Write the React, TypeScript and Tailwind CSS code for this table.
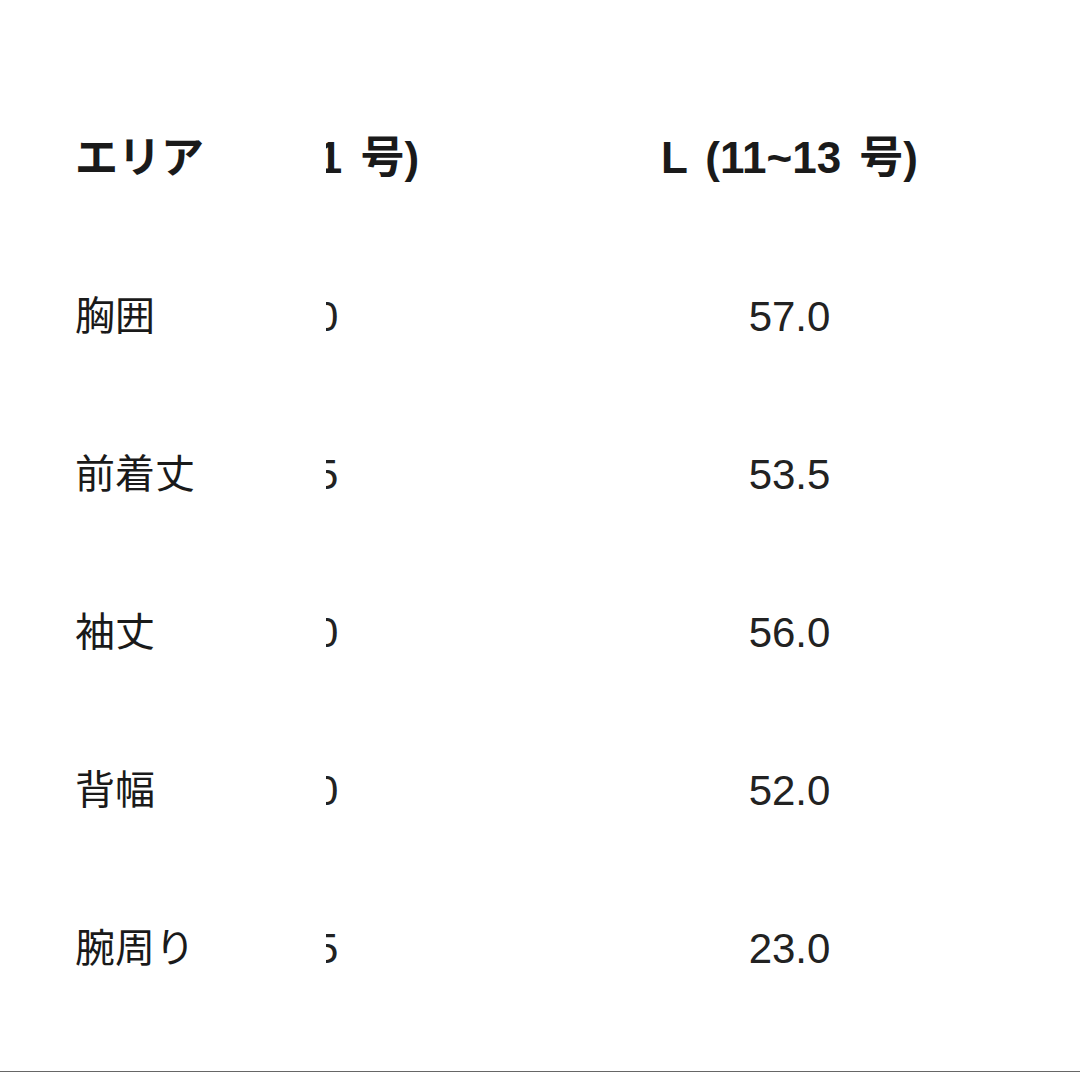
import { useEffect, useRef } from "react";

const sizes = ["M (9~11 号)", "L (11~13 号)"];

const rows = [
  { label: "胸囲", values: ["55.0", "57.0"] },
  { label: "前着丈", values: ["52.5", "53.5"] },
  { label: "袖丈", values: ["55.0", "56.0"] },
  { label: "背幅", values: ["50.0", "52.0"] },
  { label: "腕周り", values: ["22.5", "23.0"] },
];

export default function App() {
  const scrollRef = useRef<HTMLDivElement>(null);

  // the table is shown scrolled sideways, first column stays put
  useEffect(() => {
    if (scrollRef.current) scrollRef.current.scrollLeft = 288;
  }, []);

  return (
    <div
      className="w-[1080px] h-[1073px] bg-white flex flex-col text-[#1a1a1a]"
      style={{ fontFamily: '"Liberation Sans", Arial, "Noto Sans CJK JP", sans-serif' }}
    >
      <div
        ref={scrollRef}
        className="flex-1 overflow-x-auto pt-[79px] [scrollbar-width:none]"
      >
        <table className="border-collapse">
          <thead>
            <tr className="h-[158px]">
              <th className="sticky left-0 z-10 bg-white w-[326px] min-w-[326px] pl-[75px] text-left text-[43px] font-bold">
                エリア
              </th>
              {sizes.map((s, i) => (
                <th
                  key={s}
                  className={`w-[499px] min-w-[499px] text-center text-[44px] font-bold whitespace-nowrap [word-spacing:6px] ${
                    i === 0 ? "pl-[14px]" : ""
                  }`}
                >
                  {s}
                </th>
              ))}
              <th className="w-[41px] min-w-[41px]" />
            </tr>
          </thead>
          <tbody>
            {rows.map((r) => (
              <tr key={r.label} className="h-[158px]">
                <td className="sticky left-0 z-10 bg-white pl-[75px] text-left text-[40px]">
                  {r.label}
                </td>
                {r.values.map((v, i) => (
                  <td
                    key={i}
                    className={`text-center text-[42px] text-[#222] ${i === 0 ? "pl-[14px]" : ""}`}
                  >
                    {v}
                  </td>
                ))}
                <td />
              </tr>
            ))}
          </tbody>
        </table>
      </div>
      <div className="h-px bg-[#666] mb-px" />
    </div>
  );
}
